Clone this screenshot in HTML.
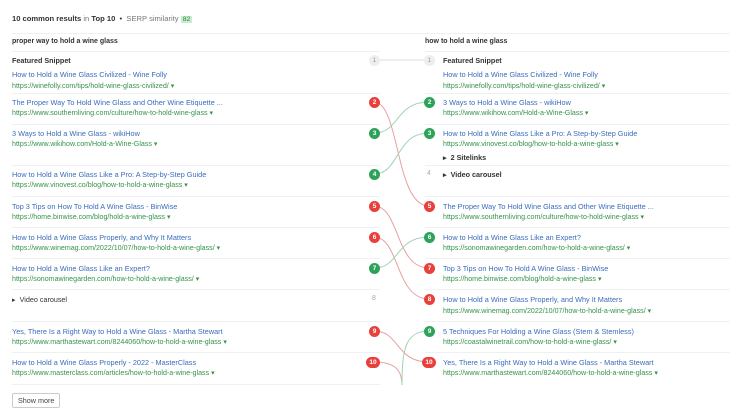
<!DOCTYPE html><html><head><style>
body{margin:0;width:730px;height:415px;background:#fff;font-family:"Liberation Sans",Arial,sans-serif;position:relative;overflow:hidden}
.a{position:absolute;white-space:nowrap}
.t{font-size:7.3px;color:#3a6cbc}
.u{font-size:7.1px;color:#35924a}
.h{font-size:7.2px;color:#333;font-weight:bold}
.ln{position:absolute;height:1px;background:#eef0f2}
.b{position:absolute;width:11px;height:11px;border-radius:50%;color:#fff;font-size:6.5px;font-weight:bold;text-align:center;line-height:11px}
.r{background:#e8403a}.g{background:#2da35a}.n{background:#eee;color:#999;font-weight:normal}
</style></head><body>
<div class="a" style="left:12px;top:14px;font-size:7.6px;color:#333"><b>10 common results</b> <span style="color:#777">in</span> <b>Top 10</b> &nbsp;•&nbsp; <span style="color:#777">SERP similarity</span> <span style="background:#c9ebcf;color:#2b8a3e;padding:0 2px;font-size:6.8px">82</span></div>
<div class="ln" style="left:12px;right:0;top:33px"></div>
<div class="a h" style="left:12px;top:38px;font-size:7px">proper way to hold a wine glass</div>
<div class="a h" style="left:425px;top:38px;font-size:7px">how to hold a wine glass</div>
<div class="ln" style="left:12px;width:368px;top:51px"></div><div class="ln" style="left:425px;right:0;top:51px"></div>
<svg class="a" style="left:0;top:0" width="730" height="415"><g fill="none" stroke-width="1">
<line x1="374" y1="60" x2="429" y2="60" stroke="#ddd"/>
<path d="M374 102 C400 102 395 206 429 206" stroke="#e8a0a0"/>
<path d="M374 133 C400 133 395 102 429 102" stroke="#9fd4b4"/>
<path d="M374 174 C400 174 395 133 429 133" stroke="#9fd4b4"/>
<path d="M374 206 C400 206 395 268 429 268" stroke="#e8a0a0"/>
<path d="M374 237 C400 237 395 299 429 299" stroke="#e8a0a0"/>
<path d="M374 268 C400 268 395 237 429 237" stroke="#9fd4b4"/>
<path d="M374 331 C400 331 395 362 429 362" stroke="#e8a0a0"/>
<path d="M374 362 C395 362 402 370 402 385" stroke="#e8a0a0"/>
<path d="M429 331 C405 331 402 350 402 385" stroke="#9fd4b4"/>
</g></svg>
<div class="a h" style="left:12px;top:56px">Featured Snippet</div><div class="b n" style="left:369px;top:55px">1</div>
<div class="a t" style="left:12px;top:70px">How to Hold a Wine Glass Civilized - Wine Folly</div><div class="a u" style="left:12px;top:81px">https://winefolly.com/tips/hold-wine-glass-civilized/ ▾</div>
<div class="ln" style="left:12px;width:368px;top:93px"></div>
<div class="a t" style="left:12px;top:98px">The Proper Way To Hold Wine Glass and Other Wine Etiquette ...</div><div class="a u" style="left:12px;top:108px">https://www.southernliving.com/culture/how-to-hold-wine-glass ▾</div><div class="b r" style="left:369px;top:97px">2</div>
<div class="ln" style="left:12px;width:368px;top:124px"></div>
<div class="a t" style="left:12px;top:129px">3 Ways to Hold a Wine Glass - wikiHow</div><div class="a u" style="left:12px;top:139px">https://www.wikihow.com/Hold-a-Wine-Glass ▾</div><div class="b g" style="left:369px;top:128px">3</div>
<div class="ln" style="left:12px;width:368px;top:165px"></div>
<div class="a t" style="left:12px;top:170px">How to Hold a Wine Glass Like a Pro: A Step-by-Step Guide</div><div class="a u" style="left:12px;top:180px">https://www.vinovest.co/blog/how-to-hold-a-wine-glass ▾</div><div class="b g" style="left:369px;top:169px">4</div>
<div class="ln" style="left:12px;width:368px;top:196px"></div>
<div class="a t" style="left:12px;top:202px">Top 3 Tips on How To Hold A Wine Glass - BinWise</div><div class="a u" style="left:12px;top:212px">https://home.binwise.com/blog/hold-a-wine-glass ▾</div><div class="b r" style="left:369px;top:201px">5</div>
<div class="ln" style="left:12px;width:368px;top:227px"></div>
<div class="a t" style="left:12px;top:233px">How to Hold a Wine Glass Properly, and Why It Matters</div><div class="a u" style="left:12px;top:243px">https://www.winemag.com/2022/10/07/how-to-hold-a-wine-glass/ ▾</div><div class="b r" style="left:369px;top:232px">6</div>
<div class="ln" style="left:12px;width:368px;top:258px"></div>
<div class="a t" style="left:12px;top:264px">How to Hold a Wine Glass Like an Expert?</div><div class="a u" style="left:12px;top:274px">https://sonomawinegarden.com/how-to-hold-a-wine-glass/ ▾</div><div class="b g" style="left:369px;top:263px">7</div>
<div class="ln" style="left:12px;width:368px;top:289px"></div>
<div class="a h" style="left:12px;top:295px;font-weight:normal;color:#333">▸ &nbsp;Video carousel</div><div class="a" style="left:372px;top:295px;font-size:7px;color:#aaa">8</div>
<div class="ln" style="left:12px;width:368px;top:321px"></div>
<div class="a t" style="left:12px;top:327px">Yes, There Is a Right Way to Hold a Wine Glass - Martha Stewart</div><div class="a u" style="left:12px;top:337px">https://www.marthastewart.com/8244060/how-to-hold-a-wine-glass ▾</div><div class="b r" style="left:369px;top:326px">9</div>
<div class="ln" style="left:12px;width:368px;top:352px"></div>
<div class="a t" style="left:12px;top:358px">How to Hold a Wine Glass Properly - 2022 - MasterClass</div><div class="a u" style="left:12px;top:368px">https://www.masterclass.com/articles/how-to-hold-a-wine-glass ▾</div><div class="b r" style="left:366px;top:357px;width:14px;border-radius:6px">10</div>
<div class="ln" style="left:12px;width:368px;top:384px"></div>
<div class="a" style="left:12px;top:393px;border:1px solid #ccc;border-radius:2px;padding:2px 5px;font-size:7.2px;color:#444">Show more</div>
<div class="b n" style="left:424px;top:55px">1</div><div class="a h" style="left:443px;top:56px">Featured Snippet</div>
<div class="a t" style="left:443px;top:70px">How to Hold a Wine Glass Civilized - Wine Folly</div><div class="a u" style="left:443px;top:81px">https://winefolly.com/tips/hold-wine-glass-civilized/ ▾</div>
<div class="ln" style="left:425px;right:0;top:93px"></div>
<div class="b g" style="left:424px;top:97px">2</div><div class="a t" style="left:443px;top:98px">3 Ways to Hold a Wine Glass - wikiHow</div><div class="a u" style="left:443px;top:108px">https://www.wikihow.com/Hold-a-Wine-Glass ▾</div>
<div class="ln" style="left:425px;right:0;top:124px"></div>
<div class="b g" style="left:424px;top:128px">3</div><div class="a t" style="left:443px;top:129px">How to Hold a Wine Glass Like a Pro: A Step-by-Step Guide</div><div class="a u" style="left:443px;top:139px">https://www.vinovest.co/blog/how-to-hold-a-wine-glass ▾</div>
<div class="a h" style="left:443px;top:153px">▸ &nbsp;2 Sitelinks</div>
<div class="ln" style="left:425px;right:0;top:165px"></div>
<div class="a" style="left:427px;top:170px;font-size:7px;color:#aaa">4</div><div class="a h" style="left:443px;top:170px">▸ &nbsp;Video carousel</div>
<div class="ln" style="left:425px;right:0;top:196px"></div>
<div class="b r" style="left:424px;top:201px">5</div><div class="a t" style="left:443px;top:202px">The Proper Way To Hold Wine Glass and Other Wine Etiquette ...</div><div class="a u" style="left:443px;top:212px">https://www.southernliving.com/culture/how-to-hold-wine-glass ▾</div>
<div class="ln" style="left:425px;right:0;top:227px"></div>
<div class="b g" style="left:424px;top:232px">6</div><div class="a t" style="left:443px;top:233px">How to Hold a Wine Glass Like an Expert?</div><div class="a u" style="left:443px;top:243px">https://sonomawinegarden.com/how-to-hold-a-wine-glass/ ▾</div>
<div class="ln" style="left:425px;right:0;top:258px"></div>
<div class="b r" style="left:424px;top:263px">7</div><div class="a t" style="left:443px;top:264px">Top 3 Tips on How To Hold A Wine Glass - BinWise</div><div class="a u" style="left:443px;top:274px">https://home.binwise.com/blog/hold-a-wine-glass ▾</div>
<div class="ln" style="left:425px;right:0;top:289px"></div>
<div class="b r" style="left:424px;top:294px">8</div><div class="a t" style="left:443px;top:295px">How to Hold a Wine Glass Properly, and Why It Matters</div><div class="a u" style="left:443px;top:306px">https://www.winemag.com/2022/10/07/how-to-hold-a-wine-glass/ ▾</div>
<div class="ln" style="left:425px;right:0;top:321px"></div>
<div class="b g" style="left:424px;top:326px">9</div><div class="a t" style="left:443px;top:327px">5 Techniques For Holding a Wine Glass (Stem &amp; Stemless)</div><div class="a u" style="left:443px;top:337px">https://coastalwinetrail.com/how-to-hold-a-wine-glass/ ▾</div>
<div class="ln" style="left:425px;right:0;top:352px"></div>
<div class="b r" style="left:422px;top:357px;width:14px;border-radius:6px">10</div><div class="a t" style="left:443px;top:358px">Yes, There Is a Right Way to Hold a Wine Glass - Martha Stewart</div><div class="a u" style="left:443px;top:368px">https://www.marthastewart.com/8244060/how-to-hold-a-wine-glass ▾</div>
</body></html>
